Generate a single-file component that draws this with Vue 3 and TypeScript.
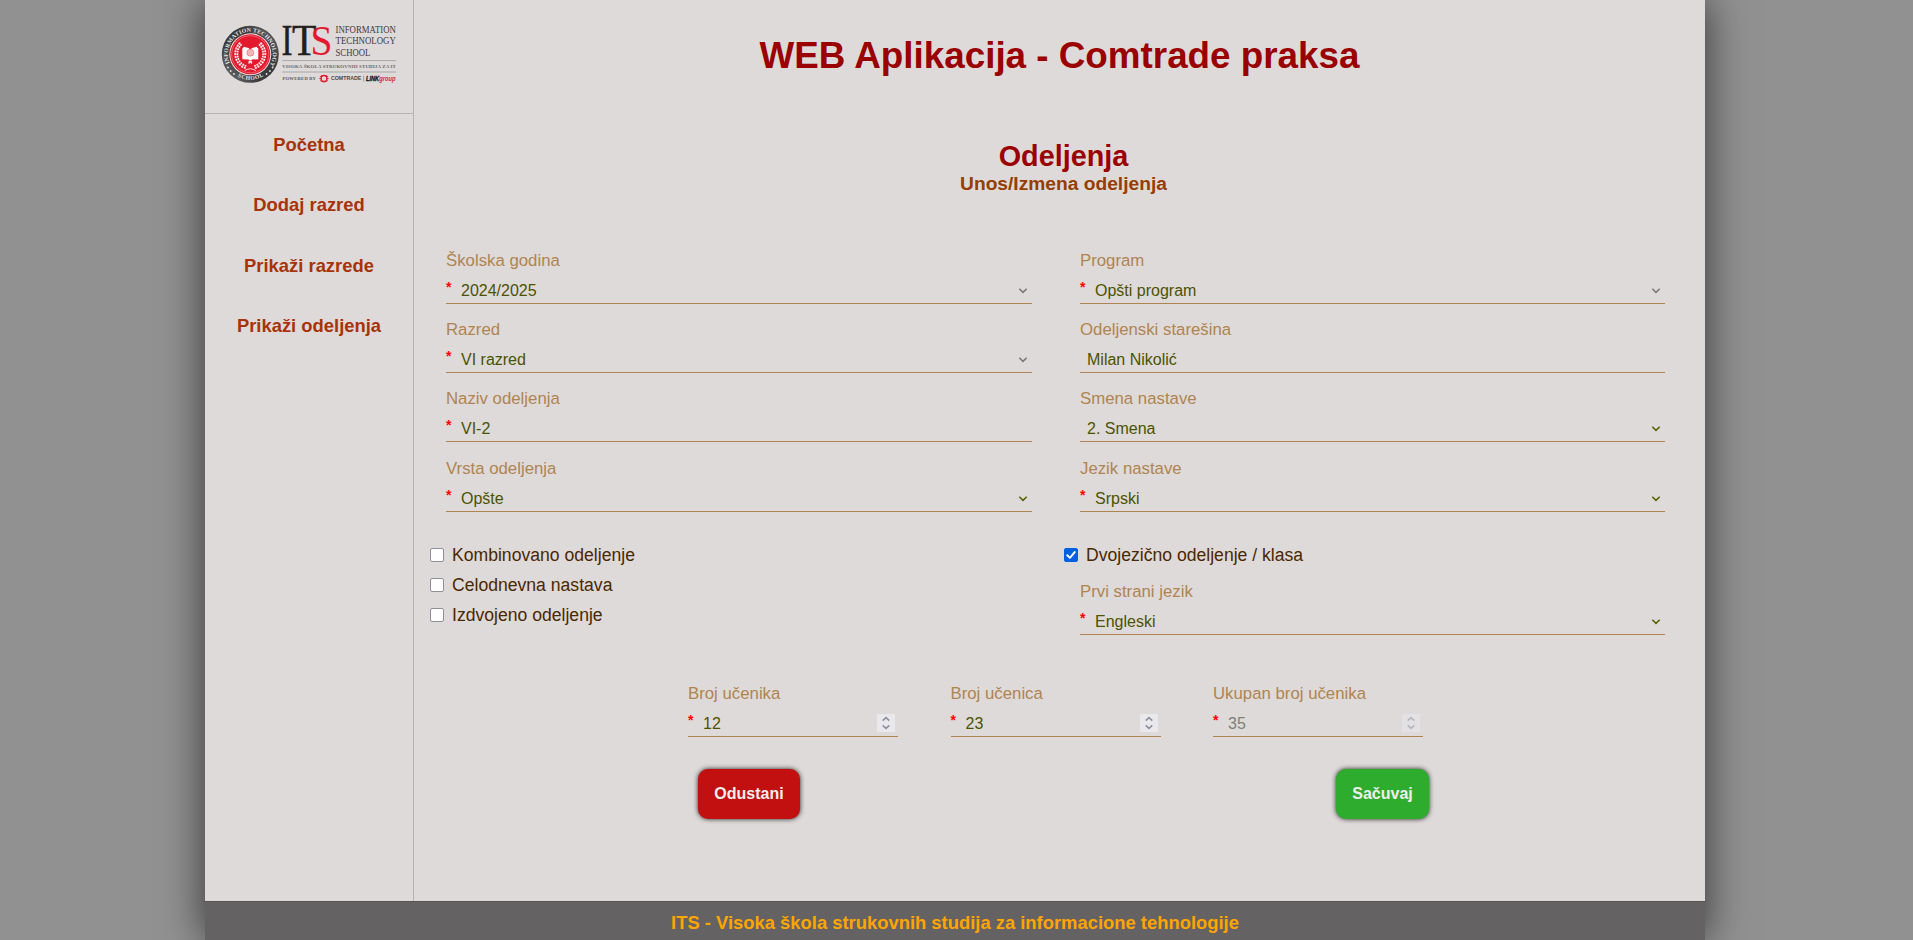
<script setup lang="ts">
import { computed, reactive, ref } from 'vue'

interface Field {
  id: string
  label: string
  value: string
  required: boolean
  kind: 'select' | 'text'
  options?: string[]
  muted?: boolean
}

const links: string[] = ['Početna', 'Dodaj razred', 'Prikaži razrede', 'Prikaži odeljenja']

const leftFields = reactive<Field[]>([
  { id: 'godina', label: 'Školska godina', value: '2024/2025', required: true, kind: 'select', options: ['2024/2025'], muted: true },
  { id: 'razred', label: 'Razred', value: 'VI razred', required: true, kind: 'select', options: ['VI razred'], muted: true },
  { id: 'naziv', label: 'Naziv odeljenja', value: 'VI-2', required: true, kind: 'text' },
  { id: 'vrsta', label: 'Vrsta odeljenja', value: 'Opšte', required: true, kind: 'select', options: ['Opšte'] },
])

const rightFields = reactive<Field[]>([
  { id: 'program', label: 'Program', value: 'Opšti program', required: true, kind: 'select', options: ['Opšti program'], muted: true },
  { id: 'staresina', label: 'Odeljenski starešina', value: 'Milan Nikolić', required: false, kind: 'text' },
  { id: 'smena', label: 'Smena nastave', value: '2. Smena', required: false, kind: 'select', options: ['1. Smena', '2. Smena'] },
  { id: 'jezik', label: 'Jezik nastave', value: 'Srpski', required: true, kind: 'select', options: ['Srpski'] },
])

const languageFields = reactive<Field[]>([
  { id: 'strani', label: 'Prvi strani jezik', value: 'Engleski', required: true, kind: 'select', options: ['Engleski'] },
])

const columns = [leftFields, rightFields]

const checks = reactive([
  { label: 'Kombinovano odeljenje', on: false },
  { label: 'Celodnevna nastava', on: false },
  { label: 'Izdvojeno odeljenje', on: false },
])
const bilingual = ref(true)

const boys = ref(12)
const girls = ref(23)
const counts = computed(() => [
  { label: 'Broj učenika', value: boys.value, disabled: false },
  { label: 'Broj učenica', value: girls.value, disabled: false },
  { label: 'Ukupan broj učenika', value: boys.value + girls.value, disabled: true },
])

function step(index: number, delta: number): void {
  if (index === 0) boys.value = Math.max(0, boys.value + delta)
  if (index === 1) girls.value = Math.max(0, girls.value + delta)
}
</script>

<template>
  <div class="page">
    <div class="body">
      <aside class="sidebar">
        <div class="brand">
          <svg class="logo" viewBox="205 0 208 113" width="208" height="113">
            <defs>
              <linearGradient id="rim" x1="0" y1="1" x2="1" y2="0">
                <stop offset="0" stop-color="#77787b" />
                <stop offset=".35" stop-color="#3b3b3d" />
                <stop offset=".65" stop-color="#3a3a3c" />
                <stop offset="1" stop-color="#6a6a6d" />
              </linearGradient>
              <path id="arcTop" d="M230.2 64.2A22.4 22.4 0 1 1 270.4 64.2" />
              <path id="arcBottom" d="M233.6 73.6A25.6 25.6 0 0 0 267 73.6" />
            </defs>
            <circle cx="250.3" cy="54.3" r="28.5" fill="url(#rim)" />
            <circle cx="250.3" cy="54.3" r="21" fill="#f5dcdc" />
            <circle cx="250.3" cy="54.3" r="20" fill="#e3192d" />
            <circle cx="250.3" cy="54.3" r="18.6" fill="none" stroke="#f3a0a5" stroke-width=".5" />
            <text class="serif" font-size="5.9" font-weight="bold" fill="#e6e6e6">
              <textPath href="#arcTop" startOffset="1" textLength="91">INFORMATION TECHNOLOGY</textPath>
            </text>
            <text class="serif" font-size="5.7" font-weight="bold" fill="#e6e6e6">
              <textPath href="#arcBottom" startOffset="5" textLength="27">SCHOOL</textPath>
            </text>
            <g fill="#e6e6e6">
              <circle cx="228" cy="67.5" r=".9" /><circle cx="230.7" cy="71" r=".9" /><circle cx="234" cy="74" r=".9" />
              <circle cx="272.6" cy="67.5" r=".9" /><circle cx="269.9" cy="71" r=".9" /><circle cx="266.6" cy="74" r=".9" />
            </g>
            <g fill="none" stroke="#fbe9e9" stroke-width="4" stroke-dasharray="1.9 .8">
              <path d="M246 67.2A14 14 0 0 1 241.5 43" />
              <path d="M254.6 67.2A14 14 0 0 0 259.1 43" />
            </g>
            <g fill="none" stroke="#e3192d" stroke-width=".5">
              <path d="M246 67.2A14 14 0 0 1 241.5 43M254.6 67.2A14 14 0 0 0 259.1 43" />
            </g>
            <path d="M242.3 48.2l1.2-.4v-1l5 1.3 1.8 1.6 1.8-1.6 5-1.3v1l1.2.4v11l-6.2.3-1.8 1-1.8-1-6.2-.3z" fill="#fff" />
            <circle cx="250.3" cy="52.7" r="3.5" fill="#f3b6ba" stroke="#dc4c59" stroke-width=".5" />
            <path d="M248.5 60.7h3.6v3.4l-1.8-1-1.8 1z" fill="#fbdede" />
            <path d="M244.8 70.5q5.5-3.4 11 0" fill="none" stroke="#fbdede" stroke-width="1" />

            <g class="serif">
              <text x="281.6" y="55.2" font-size="44" fill="#231f20" stroke="#231f20" stroke-width=".5" textLength="11" lengthAdjust="spacingAndGlyphs">I</text>
              <text x="292" y="55.2" font-size="44" fill="#231f20" stroke="#231f20" stroke-width=".5" textLength="24.5" lengthAdjust="spacingAndGlyphs">T</text>
              <text x="310.6" y="55.2" font-size="42.5" fill="#e3192d" textLength="22" lengthAdjust="spacingAndGlyphs">S</text>
              <g font-size="9.9" fill="#3d3a3b">
                <text x="335.5" y="32.6" textLength="60.3" lengthAdjust="spacingAndGlyphs">INFORMATION</text>
                <text x="335.5" y="44.2" textLength="60.3" lengthAdjust="spacingAndGlyphs">TECHNOLOGY</text>
                <text x="335.5" y="55.7" textLength="34.8" lengthAdjust="spacingAndGlyphs">SCHOOL</text>
              </g>
              <text x="282.3" y="68.4" font-size="4.9" font-weight="bold" fill="#686566" textLength="113.5">VISOKA ŠKOLA STRUKOVNIH STUDIJA ZA IT</text>
              <text x="282.5" y="80.2" font-size="4.7" font-weight="bold" fill="#5a5758" textLength="33.5">POWERED BY</text>
            </g>
            <path d="M282.3 60.6h113.7M282.3 72h113.7" stroke="#a3a1a1" stroke-width=".9" />
            <path d="M319.6 76.9a4.8 3.6 0 0 1 8.8 0h-3l-1.4-.8-1.4.8zM319.6 80.3a4.8 3.6 0 0 0 8.8 0h-3l-1.4.8-1.4-.8z" fill="#e3192d" />
            <path d="M319 78.6l3-1.9v3.8zM329 78.6l-3-1.9v3.8z" fill="#e3192d" />
            <g class="sans">
              <text x="331" y="80.4" font-size="5.2" font-weight="bold" fill="#4a4849" textLength="30.3" lengthAdjust="spacingAndGlyphs">COMTRADE</text>
              <text x="366" y="80.6" font-size="6.4" font-weight="bold" font-style="italic" fill="#151515" stroke="#151515" stroke-width=".3" textLength="13.2" lengthAdjust="spacingAndGlyphs">LINK</text>
              <text x="379.2" y="80.6" font-size="6.4" font-weight="bold" font-style="italic" fill="#dc2638" textLength="16.4" lengthAdjust="spacingAndGlyphs">group</text>
            </g>
            <path d="M363.6 75.6v6" stroke="#777" stroke-width=".6" />
          </svg>
        </div>
        <nav class="nav">
          <a v-for="link in links" :key="link">{{ link }}</a>
        </nav>
      </aside>

      <main class="main">
        <h1>WEB Aplikacija - Comtrade praksa</h1>
        <h2>Odeljenja</h2>
        <h3>Unos/Izmena odeljenja</h3>

        <div class="columns">
          <div v-for="(column, c) in columns" :key="c" class="column">
            <div v-for="field in column" :key="field.id" class="field">
              <label :for="field.id">{{ field.label }}</label>
              <div class="control">
                <span v-if="field.required" class="star">*</span>
                <select v-if="field.kind === 'select'" :id="field.id" v-model="field.value">
                  <option v-for="o in field.options" :key="o">{{ o }}</option>
                </select>
                <input v-else :id="field.id" v-model="field.value" type="text" />
                <svg v-if="field.kind === 'select'" class="chevron" :class="{ muted: field.muted }" viewBox="0 0 10 6" width="10" height="6">
                  <path d="M1.3.8L5 4.4 8.7.8" />
                </svg>
              </div>
            </div>
          </div>
        </div>

        <div class="columns flags">
          <div class="column">
            <label v-for="item in checks" :key="item.label" class="check">
              <input v-model="item.on" type="checkbox" /><span>{{ item.label }}</span>
            </label>
          </div>
          <div class="column">
            <label class="check">
              <input v-model="bilingual" type="checkbox" /><span>Dvojezično odeljenje / klasa</span>
            </label>
            <div v-for="field in languageFields" :key="field.id" class="field language">
              <label :for="field.id">{{ field.label }}</label>
              <div class="control">
                <span class="star">*</span>
                <select :id="field.id" v-model="field.value">
                  <option v-for="o in field.options" :key="o">{{ o }}</option>
                </select>
                <svg class="chevron" viewBox="0 0 10 6" width="10" height="6"><path d="M1.3.8L5 4.4 8.7.8" /></svg>
              </div>
            </div>
          </div>
        </div>

        <div class="counts">
          <div v-for="(count, i) in counts" :key="count.label" class="field" :class="{ disabled: count.disabled }">
            <label>{{ count.label }}</label>
            <div class="control">
              <span class="star">*</span>
              <input type="text" inputmode="numeric" :value="count.value" :disabled="count.disabled" />
              <svg class="spinner" viewBox="0 0 18 18" width="18" height="18">
                <rect width="18" height="18" />
                <path d="M5.7 6.6L9 3.6l3.3 3" @click="step(i, 1)" />
                <path d="M5.7 11.4l3.3 3 3.3-3" @click="step(i, -1)" />
              </svg>
            </div>
          </div>
        </div>

        <div class="actions">
          <button class="cancel" type="button">Odustani</button>
          <button class="save" type="button">Sačuvaj</button>
        </div>
      </main>
    </div>
    <footer class="footer">ITS - Visoka škola strukovnih studija za informacione tehnologije</footer>
  </div>
</template>

<style>
body {
  background: #919191;
  overflow: hidden;
}
</style>

<style scoped>
.page {
  box-sizing: border-box;
  width: 1500px;
  height: 940px;
  margin-left: 205px;
  display: flex;
  flex-direction: column;
  background: #dedad9;
  box-shadow: 0 0 40px rgba(0, 0, 0, 0.65);
  font-family: "Liberation Sans", Arial, sans-serif;
  font-size: 16px;
}
.body {
  flex: 1;
  display: flex;
  min-height: 0;
}
.sidebar {
  width: 208px;
  border-right: 1px solid #b6b3b2;
}
.brand {
  height: 113px;
  border-bottom: 1px solid #b6b3b2;
}
.logo {
  display: block;
}
.serif {
  font-family: "Liberation Serif", "Times New Roman", serif;
}
.sans {
  font-family: "Liberation Sans", Arial, sans-serif;
}
.nav {
  display: flex;
  flex-direction: column;
  padding-top: 1px;
}
.nav a {
  height: 60.4px;
  line-height: 60px;
  text-align: center;
  font-size: 18.4px;
  font-weight: bold;
  color: #a83308;
}
.main {
  flex: 1;
  min-width: 0;
}
h1,
h2,
h3 {
  margin: 0;
  text-align: center;
  font-weight: bold;
}
h1 {
  height: 138px;
  line-height: 112px;
  font-size: 36.8px;
  color: #9b0000;
}
h2,
h3 {
  padding-left: 8px;
}
h2 {
  height: 34px;
  line-height: 36px;
  font-size: 28.8px;
  color: #9b0000;
}
h3 {
  height: 69.6px;
  line-height: 23px;
  font-size: 19.2px;
  color: #963e00;
}
.columns {
  display: grid;
  grid-template-columns: 586px 585px;
  column-gap: 48px;
  margin-left: 32px;
}
.field {
  height: 69.4px;
  display: flex;
  flex-direction: column;
}
.field > label {
  height: 35px;
  line-height: 37px;
  font-size: 16.8px;
  color: #b08450;
}
.control {
  position: relative;
  display: flex;
  height: 26px;
  border-bottom: 1px solid #b08450;
}
.star {
  width: 8px;
  line-height: 21px;
  font-size: 14px;
  font-weight: bold;
  color: #ff0000;
}
.control input,
.control select {
  flex: 1;
  box-sizing: border-box;
  min-width: 0;
  height: 26px;
  margin: 0;
  padding: 2px 0 0 7px;
  border: 0;
  outline: 0;
  appearance: none;
  background: transparent;
  font: inherit;
  line-height: 24px;
  color: #4b5300;
}
.chevron {
  position: absolute;
  right: 4px;
  top: 11px;
  fill: none;
  stroke: #556000;
  stroke-width: 1.5;
  pointer-events: none;
}
.chevron.muted {
  stroke: #777;
}
.flags {
  height: 135.4px;
  margin-top: 20.4px;
}
.check {
  display: flex;
  align-items: center;
  height: 30px;
  margin-left: -16px;
  font-size: 17.6px;
  color: #4a2800;
}
.check span {
  padding-top: 2px;
}
.check input {
  box-sizing: border-box;
  appearance: none;
  width: 14px;
  height: 14px;
  margin: 0 8px 0 0;
  border: 1px solid #8f8f9d;
  border-radius: 2px;
  background: #fff;
}
.check input:checked {
  border-color: #0060df;
  background: #0060df url("data:image/svg+xml,%3Csvg xmlns='http://www.w3.org/2000/svg' viewBox='0 0 12 12'%3E%3Cpath d='M2.3 6.3l2.6 2.6 4.8-5.8' fill='none' stroke='white' stroke-width='2' stroke-linecap='round' stroke-linejoin='round'/%3E%3C/svg%3E");
}
.language {
  margin-top: 3px;
}
.counts {
  display: grid;
  grid-template-columns: repeat(3, 210px);
  column-gap: 52.5px;
  margin-left: 274px;
}
.spinner {
  position: absolute;
  right: 3px;
  top: 4px;
}
.spinner rect {
  fill: #e9e9ed;
}
.spinner path {
  fill: none;
  stroke: #8f8f9d;
  stroke-width: 1.6;
}
.disabled input {
  color: #4b5040;
  opacity: 0.65;
}
.disabled .spinner {
  opacity: 0.5;
}
.actions {
  display: flex;
  justify-content: space-between;
  width: 731px;
  margin: 24.6px 0 0 284px;
}
.actions button {
  height: 50px;
  padding: 0;
  border: 0;
  border-radius: 10px;
  box-shadow: 0 0 5px #222;
  font: bold 16px "Liberation Sans", Arial, sans-serif;
  color: #eee;
}
.cancel {
  width: 102px;
  background: #c20f0f;
}
.save {
  width: 93px;
  background: #2eac2e;
}
.footer {
  box-sizing: border-box;
  height: 39px;
  border-top: 1px solid #555253;
  background: #656263;
  text-align: center;
  line-height: 41px;
  font-size: 18.4px;
  font-weight: bold;
  color: #ffa500;
}
</style>
